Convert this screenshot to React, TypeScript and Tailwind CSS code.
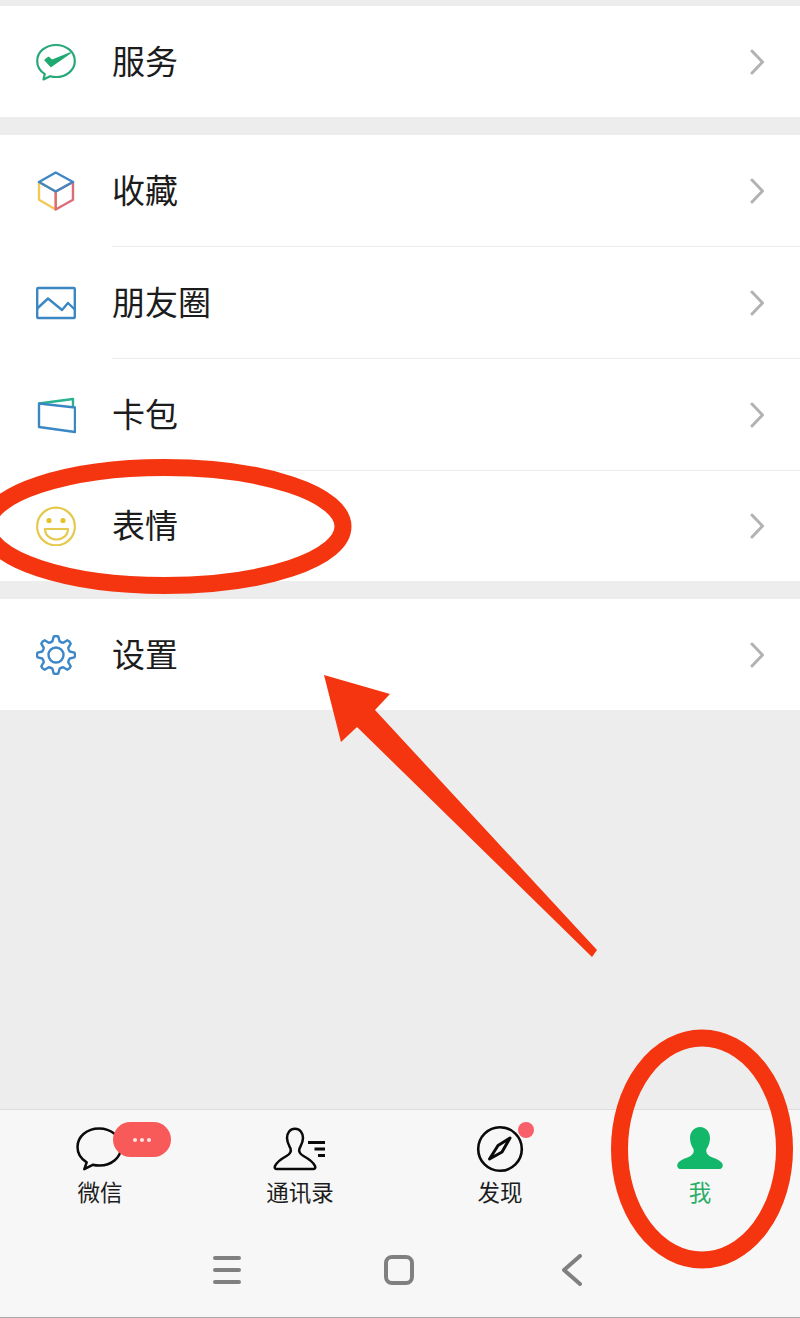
import type { ReactNode } from 'react';

const gearPath = () => {
  const teeth = 8;
  const pts: string[] = [];
  for (let i = 0; i < teeth; i++) {
    const a = (i * Math.PI * 2) / teeth - Math.PI / 2;
    const step = (Math.PI * 2) / teeth;
    const p = (r: number, t: number) => `${(20 + r * Math.cos(t)).toFixed(2)} ${(20 + r * Math.sin(t)).toFixed(2)}`;
    pts.push(`${i === 0 ? 'M' : 'L'}${p(18.6, a - step * 0.16)}`);
    pts.push(`Q${p(19.6, a)} ${p(18.6, a + step * 0.16)}`);
    pts.push(`L${p(14.2, a + step * 0.32)}`);
    pts.push(`Q${p(13.4, a + step * 0.5)} ${p(14.2, a + step * 0.68)}`);
  }
  return pts.join(' ') + ' Z';
};

const ServiceIcon = () => (
  <svg width="40" height="40" viewBox="0 0 40 40" fill="none">
    <path d="M20 3C10 3 1.200 9.600 1.200 19c0 5.600 3.200 10.300 7.600 13.100L7.500 37.500l6.600-3.300c1.900.5 3.900.8 5.900.8 10 0 18.800-6.600 18.800-16S30 3 20 3Z" stroke="#27a878" strokeWidth="2.200" strokeLinejoin="round" />
    <path d="M9 18l3.500-2.600 3.400 2.900 18.400-7.300-19.300 13.500Z" fill="#1fa971" stroke="#1fa971" strokeWidth="1.400" strokeLinejoin="round" />
  </svg>
);

const CubeIcon = () => (
  <svg width="40" height="40" viewBox="0 0 40 40" fill="none" strokeWidth="2.400" strokeLinejoin="round" strokeLinecap="round">
    <path d="M3 28.800V11l16.700 9.500v18Z" stroke="#f1c95a" />
    <path d="M37 11v17.800l-17.300 9.700v-18Z" stroke="#dc6c7a" />
    <path d="M19.700 1.500 37 11l-17.300 9.500L3 11Z" stroke="#3f87c5" />
  </svg>
);

const MomentsIcon = () => (
  <svg width="40" height="40" viewBox="0 0 40 40" fill="none" stroke="#3b87c4" strokeWidth="2.400" strokeLinejoin="round">
    <rect x="1.200" y="5" width="37.600" height="30" rx="1" />
    <path d="M1.200 25.500 12 15.500l14 11.500 6-7 6.800 6.500" />
  </svg>
);

const CardIcon = () => (
  <svg width="40" height="40" viewBox="0 0 40 40" fill="none" strokeWidth="2.400" strokeLinejoin="round">
    <path d="M3 8.500 37 4v8" stroke="#27b38f" />
    <path d="M3 8.500 39 12.500V37L3 32Z" stroke="#3b87c4" />
  </svg>
);

const SmileIcon = () => (
  <svg width="40" height="40" viewBox="0 0 40 40" fill="none">
    <circle cx="20" cy="20.500" r="18.900" stroke="#e5c94f" strokeWidth="2.200" />
    <circle cx="13" cy="14.500" r="2.600" fill="#e5c227" />
    <circle cx="27" cy="14.500" r="2.600" fill="#e5c227" />
    <path d="M9 23h23c0 6.500-5.500 10.500-11.500 10.500S9 29.500 9 23Z" stroke="#e5c94f" strokeWidth="2.200" strokeLinejoin="round" />
  </svg>
);

const GearIcon = () => (
  <svg width="40" height="40" viewBox="0 0 40 40" fill="none" stroke="#3d87c8" strokeWidth="2.400" strokeLinejoin="round">
    <path d={gearPath()} />
    <circle cx="20" cy="20" r="7.500" />
  </svg>
);

const Chevron = () => (
  <svg width="14" height="26" viewBox="0 0 14 26" fill="none" stroke="#b2b2b2" strokeWidth="3" strokeLinecap="round" strokeLinejoin="round">
    <path d="M2 2l10.500 11L2 24" />
  </svg>
);

const Row = ({ icon, label, divider, short }: { icon: ReactNode; label: string; divider?: boolean; short?: boolean }) => (
  <div>
    <div className={`flex items-center pl-9 pr-9 ${short ? 'h-[110px]' : 'h-[111px]'}`}>
      {icon}
      <span className="mb-[2px] ml-9 flex-1 text-[33px] text-[#1c1c1c]">{label}</span>
      <Chevron />
    </div>
    {divider && <div className="ml-[112px] h-px bg-[#ededed]" />}
  </div>
);

const ChatIcon = () => (
  <svg width="60" height="48" viewBox="0 0 60 48" fill="none" stroke="#0a0a0a" strokeWidth="2.500" strokeLinejoin="round">
    <path d="M29 3.500C17 3.500 7.500 11.500 7.500 22c0 6.500 3.600 12 9.200 15.300l-2.400 6.900 8.400-4.400c2 .5 4.300.8 6.800.8 12 0 21.500-8 21.500-18.600S41 3.500 29 3.500Z" />
  </svg>
);

const ContactsIcon = () => (
  <svg width="60" height="48" viewBox="0 0 60 48" fill="none" stroke="#0a0a0a" strokeWidth="2.500" strokeLinejoin="round">
    <path d="M25 3.700c-5 0-8 4.300-8 9.300 0 4.500 2 7.500 3.500 10.500 1 3-.5 5.500-4 7.500-4.500 2.500-9.500 5.500-11.500 10-.8 2 0 3 2 3h36c2 0 2.800-1 2-3-2-4.500-7-7.500-11.500-10-3.500-2-5-4.500-4-7.500C31 20.500 33 17.500 33 13c0-5-3-9.300-8-9.300Z" />
    <path d="M38 17.500h17M44.500 24H55M48 30.500h7" strokeWidth="2.800" />
  </svg>
);

const CompassIcon = () => (
  <svg width="60" height="48" viewBox="0 0 60 48" fill="none" stroke="#0a0a0a">
    <circle cx="30" cy="24" r="21.800" strokeWidth="2.600" />
    <path d="M40 13 28 20.500 19.500 34 32 27Z" strokeWidth="3" strokeLinejoin="round" />
  </svg>
);

const MeIcon = () => (
  <svg width="60" height="48" viewBox="0 0 60 48" fill="#12b76a">
    <path d="M30 2c-6 0-10 5-10 11 0 4.500 1.500 8 3.500 11 1 4-1.500 6.500-5 8-4 1.800-9.500 3.500-11 7-.8 2.500.5 5 3 5h39c2.500 0 3.800-2.500 3-5-1.500-3.500-7-5.200-11-7-3.500-1.500-6-4-5-8 2-3 3.500-6.500 3.500-11 0-6-4-11-10-11Z" />
  </svg>
);

const Tab = ({ icon, label, active, children }: { icon: ReactNode; label: string; active?: boolean; children?: ReactNode }) => (
  <div className="relative flex w-[200px] flex-col items-center">
    {icon}
    {children}
    <span className={`text-[22.500px] leading-[36px] ${active ? 'text-[#2aae67]' : 'text-[#1c1c1c]'}`}>{label}</span>
  </div>
);

export default function App() {
  return (
    <div className="relative h-[1318px] w-[800px] overflow-hidden bg-[#ededed] font-['Noto_Sans_CJK_SC','Liberation_Sans',sans-serif]">
      <div className="flex h-full flex-col pt-[6px]">
        <div className="bg-white">
          <Row icon={<ServiceIcon />} label="服务" />
        </div>

        <div className="mt-[18px] bg-white">
          <Row icon={<CubeIcon />} label="收藏" divider />
          <Row icon={<MomentsIcon />} label="朋友圈" divider />
          <Row icon={<CardIcon />} label="卡包" divider />
          <Row icon={<SmileIcon />} label="表情" short />
        </div>

        <div className="mt-[18px] bg-white">
          <Row icon={<GearIcon />} label="设置" />
        </div>

        {/* bottom tabs + android nav */}
        <div className="mt-auto h-[209px] border-t border-b border-t-[#dcdcdc] border-b-[#a8a8a8] bg-[#f7f7f7] pt-[15px]">
          <div className="flex">
            <Tab icon={<ChatIcon />} label="微信">
              <div className="absolute left-[113px] top-[-3px] flex h-[35px] w-[58px] items-center justify-center gap-[3px] rounded-full bg-[#f85a5a]">
                <span className="h-1 w-1 rounded-full bg-[#ffe4e4]" />
                <span className="h-1 w-1 rounded-full bg-[#ffe4e4]" />
                <span className="h-1 w-1 rounded-full bg-[#ffe4e4]" />
              </div>
            </Tab>
            <Tab icon={<ContactsIcon />} label="通讯录" />
            <Tab icon={<CompassIcon />} label="发现">
              <div className="absolute left-[118px] top-[-3px] h-4 w-4 rounded-full bg-[#f8606a]" />
            </Tab>
            <Tab icon={<MeIcon />} label="我" active />
          </div>

          <div className="mt-[45px] flex items-center pl-[213px]">
            <svg width="28" height="32" viewBox="0 0 28 32" fill="none" stroke="#808080" strokeWidth="4" strokeLinecap="round">
              <path d="M2 4h24M2 16h24M2 28h24" />
            </svg>
            <svg className="ml-[143px]" width="30" height="30" viewBox="0 0 30 30" fill="none" stroke="#808080" strokeWidth="4">
              <rect x="2" y="2" width="26" height="26" rx="6" />
            </svg>
            <svg className="ml-[148px]" width="20" height="32" viewBox="0 0 20 32" fill="none" stroke="#808080" strokeWidth="4" strokeLinecap="round" strokeLinejoin="round">
              <path d="M18 2 2 16l16 14" />
            </svg>
          </div>
        </div>
      </div>

      {/* red annotations drawn on top of the screenshot */}
      <svg className="pointer-events-none absolute inset-0" width="800" height="1318" viewBox="0 0 800 1318" fill="none">
        <ellipse cx="165" cy="526.500" rx="178" ry="59" stroke="#f5350f" strokeWidth="17" />
        <ellipse cx="702" cy="1149" rx="82.500" ry="111" stroke="#f5350f" strokeWidth="17" />
        <path d="M324 675 390 694 375 710 597 950 592 957 357 727 341 742Z" fill="#f5350f" />
      </svg>
    </div>
  );
}
